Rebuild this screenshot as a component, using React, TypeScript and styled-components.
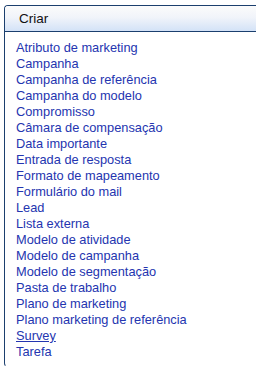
import React from "react";
import styled, { createGlobalStyle } from "styled-components";

const Global = createGlobalStyle`
  html, body { margin: 0; padding: 0; background: #ffffff; }
  body { font-family: "Liberation Sans", Arial, sans-serif; }
`;

const Page = styled.div`
  padding: 5px 0 0 4px;
  height: 364px;
  overflow: hidden;
`;

const Panel = styled.div`
  width: 270px;
  height: 362px;
  border-left: 1px solid #1b3f6e;
  border-top: 1px solid #1b3f6e;
  border-bottom: 1px solid #ffffff;
  border-radius: 4px 0 0 4px;
  box-sizing: border-box;
  display: flex;
  flex-direction: column;
`;

const Header = styled.div`
  height: 25px;
  border-bottom: 1px solid #1b3f6e;
  border-top-left-radius: 3px;
  background: linear-gradient(to bottom, #fbfbfb 0%, #f1f4fa 45%, #d3e2f7 100%);
  display: flex;
  align-items: center;
  padding-left: 14px;
  font-size: 13.5px;
  color: #111111;
`;

const List = styled.ul`
  list-style: none;
  margin: 0;
  padding: 8px 0 0 11px;
  display: flex;
  flex-direction: column;
`;

const Item = styled.li<{ $hover?: boolean }>`
  font-size: 12.8px;
  line-height: 16px;
  height: 16px;
  color: #2435b0;
  text-decoration: ${(p) => (p.$hover ? "underline" : "none")};
  white-space: nowrap;
`;

const items = [
  "Atributo de marketing",
  "Campanha",
  "Campanha de referência",
  "Campanha do modelo",
  "Compromisso",
  "Câmara de compensação",
  "Data importante",
  "Entrada de resposta",
  "Formato de mapeamento",
  "Formulário do mail",
  "Lead",
  "Lista externa",
  "Modelo de atividade",
  "Modelo de campanha",
  "Modelo de segmentação",
  "Pasta de trabalho",
  "Plano de marketing",
  "Plano marketing de referência",
  "Survey",
  "Tarefa",
];

export default function App() {
  return (
    <>
      <Global />
      <Page>
        <Panel>
          <Header>Criar</Header>
          <List>
            {items.map((t) => (
              <Item key={t} $hover={t === "Survey"}>
                {t}
              </Item>
            ))}
          </List>
        </Panel>
      </Page>
    </>
  );
}
